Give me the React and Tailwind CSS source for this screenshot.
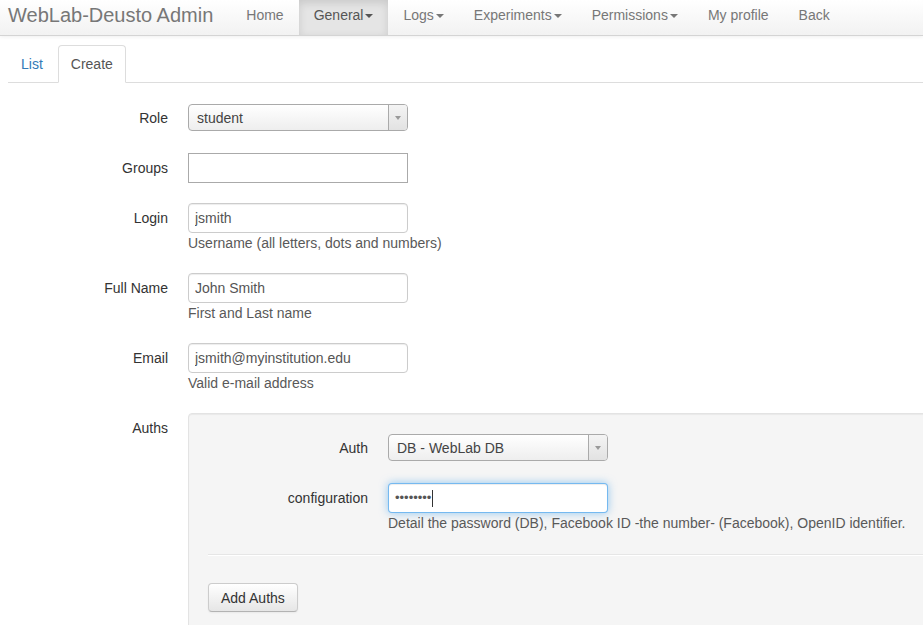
import React from 'react'

const NAV = [
  { label: 'Home' },
  { label: 'General', caret: true, active: true },
  { label: 'Logs', caret: true },
  { label: 'Experiments', caret: true },
  { label: 'Permissions', caret: true },
  { label: 'My profile' },
  { label: 'Back' },
]

function Caret({ color = 'border-t-[#777]' }) {
  return (
    <span className={`inline-block ml-[2px] align-middle w-0 h-0 border-t-[4px] border-x-[4px] border-x-transparent ${color}`} />
  )
}

function Row({ label, children }) {
  return (
    <div className="flex mb-5">
      <div className="w-[160px] shrink-0 text-right pt-[5px]">{label}</div>
      <div className="ml-5 flex-1 min-w-0">{children}</div>
    </div>
  )
}

function Select2({ value }) {
  return (
    <div className="h-[30px] pt-px">
      <div className="relative w-[220px] h-[27px] border border-[#aaa] rounded-[4px] bg-gradient-to-b from-white to-[#eeeeee] flex items-center pl-2 text-[#444] overflow-hidden">
        <span className="leading-[20px]">{value}</span>
        <div className="absolute right-0 top-0 bottom-0 w-[19px] border-l border-[#aaa] bg-gradient-to-b from-[#f4f4f4] to-[#e2e2e2] flex items-center justify-center">
          <span className="w-0 h-0 border-t-[4px] border-x-[3px] border-x-transparent border-t-[#999]" />
        </div>
      </div>
    </div>
  )
}

function TextInput({ value }) {
  return (
    <input
      readOnly
      value={value}
      className="block w-[220px] h-[30px] px-[6px] border border-[#ccc] rounded-[4px] bg-white text-[#555] shadow-[inset_0_1px_1px_rgba(0,0,0,0.075)] outline-none"
    />
  )
}

function Help({ children }) {
  return <div className="text-[#595959] leading-[20px] whitespace-nowrap">{children}</div>
}

export default function App() {
  return (
    <div className="w-[923px] h-[625px] overflow-hidden bg-white font-['Liberation_Sans',Arial,sans-serif] text-[14px] leading-[20px] text-[#333]">
      <div className="h-[36px] flex bg-gradient-to-b from-white to-[#f2f2f2] border-b border-[#d4d4d4] shadow-[0_1px_4px_rgba(0,0,0,0.065)]">
        <div className="pl-2 pr-[18px] h-[35px] pt-[5px] text-[20px] text-[#777]">WebLab-Deusto Admin</div>
        <div className="flex">
          {NAV.map(item => (
            <div
              key={item.label}
              className={
                item.active
                  ? 'h-[35px] px-[15px] pt-[5px] text-[#555] bg-[#e5e5e5] shadow-[inset_0_3px_8px_rgba(0,0,0,0.125)]'
                  : 'h-[35px] px-[15px] pt-[5px] text-[#777]'
              }
            >
              {item.label}
              {item.caret && <Caret color={item.active ? 'border-t-[#555]' : 'border-t-[#777]'} />}
            </div>
          ))}
        </div>
      </div>

      <div className="pl-2">
        <div className="mt-[9px] flex border-b border-[#ddd]">
          <div className="-mb-px mr-[2px] px-3 py-2 border border-transparent text-[#337ab7]">List</div>
          <div className="-mb-px mr-[2px] px-3 py-2 border border-[#ddd] border-b-white rounded-t-[4px] bg-white text-[#555]">Create</div>
        </div>

        <div className="pt-5">
          <Row label="Role">
            <Select2 value="student" />
          </Row>
          <Row label="Groups">
            <div className="w-[220px] h-[30px] border border-[#aaa] bg-white" />
          </Row>
          <Row label="Login">
            <TextInput value="jsmith" />
            <Help>Username (all letters, dots and numbers)</Help>
          </Row>
          <Row label="Full Name">
            <TextInput value="John Smith" />
            <Help>First and Last name</Help>
          </Row>
          <Row label="Email">
            <TextInput value="jsmith@myinstitution.edu" />
            <Help>Valid e-mail address</Help>
          </Row>
          <div className="flex">
            <div className="w-[160px] shrink-0 text-right pt-[5px]">Auths</div>
            <div className="ml-5 flex-1 min-w-0">
              <div className="mr-[-60px] p-[19px] pb-10 bg-[#f5f5f5] border border-[#e3e3e3] rounded-[4px] shadow-[inset_0_1px_1px_rgba(0,0,0,0.05)]">
                <Row label="Auth">
                  <Select2 value="DB - WebLab DB" />
                </Row>
                <div className="flex">
                  <div className="w-[160px] shrink-0 text-right pt-[5px]">configuration</div>
                  <div className="ml-5 flex-1 min-w-0">
                    <div className="w-[220px] h-[30px] px-[6px] flex items-center border border-[rgba(82,168,236,0.8)] rounded-[4px] bg-white shadow-[inset_0_1px_1px_rgba(0,0,0,0.075),0_0_8px_rgba(82,168,236,0.6)]">
                      <span className="text-[#555] text-[13px]">••••••••</span>
                      <span className="ml-px w-px h-[17px] bg-[#333]" />
                    </div>
                    <Help>Detail the password (DB), Facebook ID -the number- (Facebook), OpenID identifier.</Help>
                  </div>
                </div>
                <div className="mt-[21px] border-t border-[#e6e6e6] border-b border-b-white" />
                <button className="mt-[27px] h-[29px] px-3 border border-[#ccc] border-b-[#b3b3b3] rounded-[4px] bg-gradient-to-b from-white to-[#e6e6e6] text-[#333] shadow-[inset_0_1px_0_rgba(255,255,255,0.2),0_1px_2px_rgba(0,0,0,0.05)]">
                  Add Auths
                </button>
              </div>
            </div>
          </div>
        </div>
      </div>
    </div>
  )
}
